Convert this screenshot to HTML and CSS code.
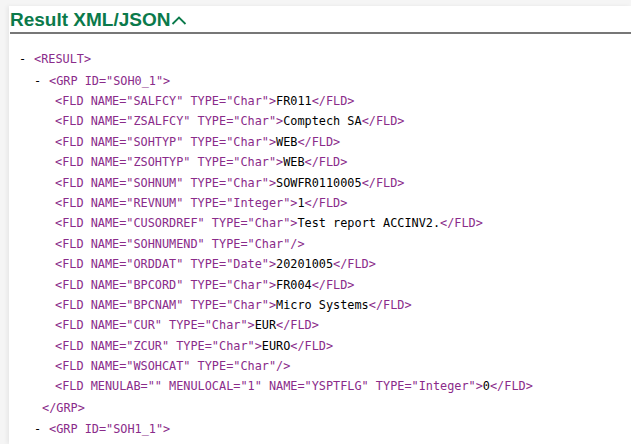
FILE: index.html
```html
<!DOCTYPE html>
<html>
<head>
<meta charset="utf-8">
<link rel="stylesheet" href="styles.css">
</head>
<body>
<div class="panel">
  <h2 class="title">Result XML/JSON<svg class="chev" width="16" height="12" viewBox="0 0 16 12"><path d="M1.5 10 L8 3.5 L14.5 10" fill="none" stroke="#0b7a4b" stroke-width="1.8"/></svg></h2>
  <div class="xml">
    <div class="row lvl0"><span class="dash">-</span><span class="m">&lt;RESULT&gt;</span></div>
    <div class="row lvl1"><span class="dash">-</span><span class="m">&lt;GRP ID="SOH0_1"&gt;</span></div>
    <div class="fields">
      <div class="row fld"><span class="m">&lt;FLD NAME="SALFCY" TYPE="Char"&gt;</span>FR011<span class="m">&lt;/FLD&gt;</span></div>
      <div class="row fld"><span class="m">&lt;FLD NAME="ZSALFCY" TYPE="Char"&gt;</span>Comptech SA<span class="m">&lt;/FLD&gt;</span></div>
      <div class="row fld"><span class="m">&lt;FLD NAME="SOHTYP" TYPE="Char"&gt;</span>WEB<span class="m">&lt;/FLD&gt;</span></div>
      <div class="row fld"><span class="m">&lt;FLD NAME="ZSOHTYP" TYPE="Char"&gt;</span>WEB<span class="m">&lt;/FLD&gt;</span></div>
      <div class="row fld"><span class="m">&lt;FLD NAME="SOHNUM" TYPE="Char"&gt;</span>SOWFR0110005<span class="m">&lt;/FLD&gt;</span></div>
      <div class="row fld"><span class="m">&lt;FLD NAME="REVNUM" TYPE="Integer"&gt;</span>1<span class="m">&lt;/FLD&gt;</span></div>
      <div class="row fld"><span class="m">&lt;FLD NAME="CUSORDREF" TYPE="Char"&gt;</span>Test report ACCINV2.<span class="m">&lt;/FLD&gt;</span></div>
      <div class="row fld"><span class="m">&lt;FLD NAME="SOHNUMEND" TYPE="Char"/&gt;</span></div>
      <div class="row fld"><span class="m">&lt;FLD NAME="ORDDAT" TYPE="Date"&gt;</span>20201005<span class="m">&lt;/FLD&gt;</span></div>
      <div class="row fld"><span class="m">&lt;FLD NAME="BPCORD" TYPE="Char"&gt;</span>FR004<span class="m">&lt;/FLD&gt;</span></div>
      <div class="row fld"><span class="m">&lt;FLD NAME="BPCNAM" TYPE="Char"&gt;</span>Micro Systems<span class="m">&lt;/FLD&gt;</span></div>
      <div class="row fld"><span class="m">&lt;FLD NAME="CUR" TYPE="Char"&gt;</span>EUR<span class="m">&lt;/FLD&gt;</span></div>
      <div class="row fld"><span class="m">&lt;FLD NAME="ZCUR" TYPE="Char"&gt;</span>EURO<span class="m">&lt;/FLD&gt;</span></div>
      <div class="row fld"><span class="m">&lt;FLD NAME="WSOHCAT" TYPE="Char"/&gt;</span></div>
      <div class="row fld"><span class="m">&lt;FLD MENULAB="" MENULOCAL="1" NAME="YSPTFLG" TYPE="Integer"&gt;</span>0<span class="m">&lt;/FLD&gt;</span></div>
    </div>
    <div class="row close"><span class="m">&lt;/GRP&gt;</span></div>
    <div class="row lvl1"><span class="dash">-</span><span class="m">&lt;GRP ID="SOH1_1"&gt;</span></div>
    <div class="fields">
      <div class="row fld"><span class="m">&lt;FLD NAME="SALFCY" TYPE="Char"&gt;</span>FR011<span class="m">&lt;/FLD&gt;</span></div>
    </div>
  </div>
</div>
</body>
</html>
```

FILE: styles.css
```css
html, body {
  margin: 0;
  padding: 0;
}
body {
  background: #f5f5f5;
  padding: 6px 0 0 9px;
  height: 444px;
  box-sizing: border-box;
  overflow: hidden;
}
.panel {
  background: #ffffff;
  box-shadow: -2px 0 4px rgba(0, 0, 0, 0.06);
  padding-left: 1px;
  height: 100%;
}
.title {
  margin: 0;
  font-family: "Liberation Sans", Arial, sans-serif;
  font-weight: 700;
  font-size: 19px;
  color: #0b7a4b;
  line-height: 24px;
  height: 25px;
  padding-top: 1px;
  border-bottom: 2px solid #777777;
  display: flex;
  align-items: center;
}
.chev {
  margin-left: 1px;
  margin-top: 1px;
}
.xml {
  font-family: "DejaVu Sans Mono", "Liberation Mono", monospace;
  font-size: 11.85px;
  color: #000000;
  padding-top: 14px;
}
.row {
  white-space: pre;
  height: 20.4px;
  line-height: 20.4px;
}
.m {
  color: #8a2b8a;
}
.dash {
  display: inline-block;
  width: 15px;
}
.lvl0 {
  padding-left: 9px;
  height: 22px;
  line-height: 22px;
}
.lvl1 {
  padding-left: 24px;
  height: 21px;
  line-height: 22px;
}
.fld {
  padding-left: 45px;
}
.close {
  padding-left: 32px;
  height: 21.5px;
  line-height: 22px;
}
```
